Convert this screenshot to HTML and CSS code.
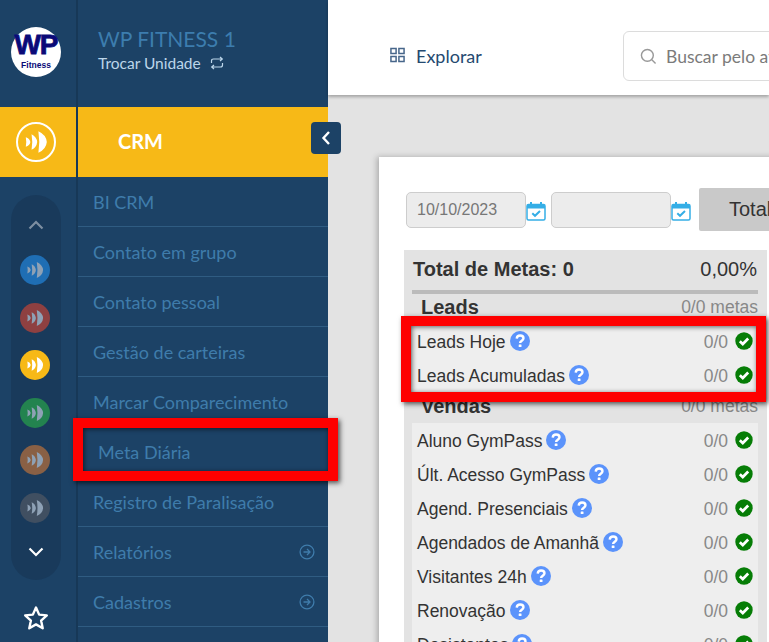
FILE: index.html
```
<!DOCTYPE html>
<html lang="pt-BR">
<head>
<meta charset="utf-8">
<title>CRM - Meta Diária</title>
<link rel="stylesheet" href="styles.css">
</head>
<body>
<svg class="defs" width="0" height="0" aria-hidden="true">
  <defs>
    <symbol id="ff" viewBox="0 0 20 20">
      <path d="M1.500 6 Q4.800 7 5.300 10 Q4.800 13 1.500 14 Q2.300 10 1.500 6Z"/>
      <path d="M6.300 3.500 Q10.500 5.500 11 10 Q10.500 14.500 6.300 16.500 Q7.500 10 6.300 3.500Z"/>
      <path d="M12 1 Q18.500 4 19 10 Q18.500 16 12 19 Q13.500 10 12 1Z"/>
    </symbol>
    <symbol id="help" viewBox="0 0 20 20">
      <circle cx="10" cy="10" r="10" fill="#5b93fb"/>
      <path d="M6.700 7.600 C6.900 5.500 8.300 4.500 10.100 4.500 C12.100 4.500 13.500 5.700 13.500 7.300 C13.500 9.600 10.100 9.700 10.100 12" fill="none" stroke="#fff" stroke-width="2.400"/>
      <rect x="8.700" y="13.400" width="2.800" height="2.700" rx=".5" fill="#fff"/>
    </symbol>
    <symbol id="check" viewBox="0 0 18 18">
      <circle cx="9" cy="9" r="8.700" fill="#067d06"/>
      <path d="M4.800 9.200 L7.800 12 L13.200 6.500" fill="none" stroke="#fff" stroke-width="2.700"/>
    </symbol>
    <symbol id="cal" viewBox="0 0 20 20">
      <path d="M1 5 Q1 3.500 2.500 3.500 H17.500 Q19 3.500 19 5 V7.500 H1Z" fill="#35aee6"/>
      <rect x="1" y="3.500" width="18" height="15.500" rx="1.500" fill="none" stroke="#35aee6" stroke-width="1.500"/>
      <path d="M5 1 V4.500 M15 1 V4.500" stroke="#35aee6" stroke-width="2"/>
      <path d="M6.300 12.300 L9 14.800 L14 10" fill="none" stroke="#35aee6" stroke-width="2"/>
    </symbol>
    <symbol id="arrow" viewBox="0 0 16 16">
      <circle cx="8" cy="8" r="6.900" fill="none" stroke="currentColor" stroke-width="1.300"/>
      <path d="M4.500 8 H11 M8 5 L11 8 L8 11" fill="none" stroke="currentColor" stroke-width="1.300"/>
    </symbol>
  </defs>
</svg>

<div class="app">
  <aside class="rail">
    <div class="rail-logo">
      <div class="logo">
        <span class="logo-wp">WP</span>
        <span class="logo-sub">Fitness</span>
      </div>
    </div>
    <div class="rail-active">
      <span class="ring"><svg class="ff-big"><use href="#ff"/></svg></span>
    </div>
    <div class="pill">
      <svg class="chev chev-dim" viewBox="0 0 16 10"><path d="M1.500 8.500 L8 2 L14.500 8.500" /></svg>
      <div class="mods">
        <span class="mod mod-blue"><svg class="ff"><use href="#ff"/></svg></span>
        <span class="mod mod-red"><svg class="ff"><use href="#ff"/></svg></span>
        <span class="mod mod-yellow"><svg class="ff ff-on"><use href="#ff"/></svg></span>
        <span class="mod mod-green"><svg class="ff"><use href="#ff"/></svg></span>
        <span class="mod mod-brown"><svg class="ff"><use href="#ff"/></svg></span>
        <span class="mod mod-gray"><svg class="ff"><use href="#ff"/></svg></span>
      </div>
      <svg class="chev" viewBox="0 0 16 10"><path d="M1.500 1.500 L8 8 L14.500 1.500" /></svg>
    </div>
    <svg class="star" viewBox="0 0 24 24"><path d="M12 2.300 L14.900 8.900 L22 9.600 L16.700 14.400 L18.200 21.500 L12 17.900 L5.800 21.500 L7.300 14.400 L2 9.600 L9.100 8.900Z"/></svg>
  </aside>

  <nav class="side">
    <div class="unit">
      <div class="unit-name">WP FITNESS 1</div>
      <div class="unit-switch">Trocar Unidade
        <svg class="swap" viewBox="0 0 14 14"><path d="M1.500 7 V5 Q1.500 3 3.500 3 H12 M10 1 L12.300 3 L10 5 M12.500 7 V9 Q12.500 11 10.500 11 H2 M4 9 L1.700 11 L4 13"/></svg>
      </div>
    </div>
    <div class="module">CRM</div>
    <ul class="menu">
      <li class="item">BI CRM</li>
      <li class="item">Contato em grupo</li>
      <li class="item">Contato pessoal</li>
      <li class="item">Gestão de carteiras</li>
      <li class="item">Marcar Comparecimento</li>
      <li class="item item-shift">Meta Diária</li>
      <li class="item">Registro de Paralisação</li>
      <li class="item">Relatórios <svg class="item-arrow"><use href="#arrow"/></svg></li>
      <li class="item">Cadastros <svg class="item-arrow"><use href="#arrow"/></svg></li>
    </ul>
  </nav>

  <div class="main">
    <header class="top">
      <a class="explore">
        <svg class="grid-ic" viewBox="0 0 16 16"><path d="M1 1h5.500v5.500H1zM9.500 1H15v5.500H9.500zM1 9.500h5.500V15H1zM9.500 9.500H15V15H9.500z"/></svg>
        Explorar
      </a>
      <div class="search">
        <svg class="search-ic" viewBox="0 0 18 18"><circle cx="7.800" cy="7.800" r="6.300"/><path d="M12.500 12.500 L16.500 16.500"/></svg>
        <span class="search-ph">Buscar pelo atalho</span>
      </div>
    </header>

    <section class="content">
      <div class="card">
        <div class="filters">
          <div class="date">10/10/2023</div>
          <svg class="cal"><use href="#cal"/></svg>
          <div class="date"></div>
          <svg class="cal"><use href="#cal"/></svg>
          <button class="total-btn">Total</button>
        </div>
        <div class="table">
          <div class="total-row"><strong>Total de Metas: 0</strong><span>0,00%</span></div>
          <div class="rule"></div>
          <div class="group-head"><strong>Leads</strong><span>0/0 metas</span></div>
          <div class="list">
            <div class="row"><span class="label">Leads Hoje</span><svg class="help"><use href="#help"/></svg><span class="count">0/0</span><svg class="ok"><use href="#check"/></svg></div>
            <div class="row"><span class="label">Leads Acumuladas</span><svg class="help"><use href="#help"/></svg><span class="count">0/0</span><svg class="ok"><use href="#check"/></svg></div>
          </div>
          <div class="group-head group-head-next"><strong>Vendas</strong><span>0/0 metas</span></div>
          <div class="list">
            <div class="row"><span class="label">Aluno GymPass</span><svg class="help"><use href="#help"/></svg><span class="count">0/0</span><svg class="ok"><use href="#check"/></svg></div>
            <div class="row"><span class="label">Últ. Acesso GymPass</span><svg class="help"><use href="#help"/></svg><span class="count">0/0</span><svg class="ok"><use href="#check"/></svg></div>
            <div class="row"><span class="label">Agend. Presenciais</span><svg class="help"><use href="#help"/></svg><span class="count">0/0</span><svg class="ok"><use href="#check"/></svg></div>
            <div class="row"><span class="label">Agendados de Amanhã</span><svg class="help"><use href="#help"/></svg><span class="count">0/0</span><svg class="ok"><use href="#check"/></svg></div>
            <div class="row"><span class="label">Visitantes 24h</span><svg class="help"><use href="#help"/></svg><span class="count">0/0</span><svg class="ok"><use href="#check"/></svg></div>
            <div class="row"><span class="label">Renovação</span><svg class="help"><use href="#help"/></svg><span class="count">0/0</span><svg class="ok"><use href="#check"/></svg></div>
            <div class="row"><span class="label">Desistentes</span><svg class="help"><use href="#help"/></svg><span class="count">0/0</span><svg class="ok"><use href="#check"/></svg></div>
          </div>
        </div>
      </div>
    </section>
  </div>

  <button class="collapse" aria-label="Recolher"><svg viewBox="0 0 10 16"><path d="M8 2 L2.500 8 L8 14"/></svg></button>
  <div class="mark mark-menu"></div>
  <div class="mark mark-leads"></div>
</div>
</body>
</html>
```

FILE: styles.css
```
* { box-sizing: border-box; }
html, body { margin: 0; padding: 0; }
body { font-family: "Liberation Sans", Arial, sans-serif; background: #e3e3e3; }
.defs { position: absolute; }

.app {
  position: relative;
  display: flex;
  width: 769px;
  height: 642px;
  overflow: hidden;
}

/* rail */
.rail {
  flex: none;
  width: 78px;
  display: flex;
  flex-direction: column;
  align-items: stretch;
  background: #1c4266;
  border-right: 2px solid #173857;
}
.rail-logo {
  height: 107px;
  padding: 27px 0 0 11px;
}
.logo {
  width: 50px;
  height: 50px;
  border-radius: 50%;
  background: #fff;
  color: #0a0a78;
  display: flex;
  flex-direction: column;
  align-items: center;
  font-weight: 700;
}
.logo-wp { font-size: 28px; line-height: 28px; margin-top: 4px; letter-spacing: -1px; -webkit-text-stroke: .8px #0a0a78; }
.logo-sub { font-size: 8.500px; line-height: 9px; margin-top: 1.500px; }
.rail-active {
  height: 70px;
  background: #f7b917;
  display: flex;
  align-items: center;
  justify-content: center;
  padding-right: 4px;
}
.ring {
  width: 40px;
  height: 40px;
  border: 2px solid #fff;
  border-radius: 50%;
  display: flex;
  align-items: center;
  justify-content: center;
}
.ff-big { width: 24px; height: 24px; fill: #fff; }
.pill {
  width: 50px;
  height: 385px;
  margin: 18px 0 0 11px;
  border-radius: 25px;
  background: #193a5b;
  display: flex;
  flex-direction: column;
  align-items: center;
}
.chev { width: 16px; height: 10px; margin-top: 25px; flex: none; fill: none; stroke: #fff; stroke-width: 2.200; }
.chev-dim { stroke: #7d8ea1; }
.mods { display: flex; flex-direction: column; gap: 17.600px; margin-top: 25px; margin-left: -2px; }
.mods + .chev { margin-top: 24px; }
.mod {
  width: 30px;
  height: 30px;
  border-radius: 50%;
  display: flex;
  align-items: center;
  justify-content: center;
}
.mod-blue { background: #1f6eb4; }
.mod-red { background: #8e4041; }
.mod-yellow { background: #f7b917; }
.mod-green { background: #23834f; }
.mod-brown { background: #896045; }
.mod-gray { background: #404f61; }
.ff { width: 18px; height: 18px; fill: #8ea1b5; }
.ff-on { fill: #fff; }
.star {
  width: 26px;
  height: 26px;
  margin: 25px 0 0 23px;
  fill: none;
  stroke: #fff;
  stroke-width: 2.200;
  stroke-linejoin: round;
}

/* sidebar */
.side {
  flex: none;
  width: 250px;
  background: #1c4266;
  font-family: Lato, "Noto Sans", sans-serif;
}
.unit { height: 107px; padding: 26px 0 0 20px; }
.unit-name { font-size: 21px; line-height: 25px; color: #3c7dae; }
.unit-switch {
  display: flex;
  align-items: center;
  gap: 9px;
  font-size: 15.500px;
  line-height: 24px;
  color: #bcd6ea;
}
.swap { width: 14px; height: 14px; fill: none; stroke: #bcd6ea; stroke-width: 1.200; }
.module {
  height: 70px;
  padding-left: 40px;
  background: #f7b917;
  color: #fff;
  font-size: 20px;
  font-weight: 700;
  line-height: 68px;
}
.menu { list-style: none; margin: 0; padding: 0; }
.item {
  height: 50px;
  padding: 0 13px 0 15px;
  border-bottom: 1px solid #2f5c82;
  color: #3f7cab;
  font-size: 18px;
  display: flex;
  align-items: center;
  justify-content: space-between;
}
.item-shift { padding-left: 20px; }
.item-arrow { width: 16px; height: 16px; color: #3f7cab; }

/* main */
.main {
  flex: none;
  width: 441px;
  display: flex;
  flex-direction: column;
}
.top {
  flex: none;
  height: 95px;
  background: #fff;
  box-shadow: 0 2px 3px rgba(0, 0, 0, .28);
  display: flex;
  align-items: flex-start;
  padding: 31px 0 0 62px;
  position: relative;
  z-index: 1;
}
.explore {
  display: flex;
  align-items: center;
  gap: 11px;
  flex: none;
  width: 233px;
  height: 50px;
  font-family: Lato, "Noto Sans", sans-serif;
  font-size: 18px;
  color: #254a70;
}
.grid-ic { width: 15px; height: 16px; fill: none; stroke: #47668a; stroke-width: 1.600; margin-top: -3px; }
.search {
  flex: none;
  width: 300px;
  height: 50px;
  border: 1px solid #dcdcdc;
  border-radius: 6px;
  display: flex;
  align-items: center;
  padding-left: 16px;
  gap: 9px;
  font-family: Lato, "Noto Sans", sans-serif;
  font-size: 17.500px;
  color: #7b7b7b;
}
.search-ic { width: 17px; height: 17px; fill: none; stroke: #999; stroke-width: 1.500; }
.search-ph { white-space: nowrap; }
.content {
  flex: 1;
  background: #e3e3e3;
  padding: 62px 0 0 51px;
  overflow: hidden;
}
.card {
  width: 520px;
  height: 600px;
  padding: 31px 0 0 25px;
  background: #fff;
  box-shadow: -2px 0 6px rgba(0, 0, 0, .25);
}
.filters { display: flex; align-items: center; height: 43px; padding-left: 2px; }
.date {
  flex: none;
  width: 120px;
  height: 36px;
  padding: 0 10px;
  background: #ececec;
  border: 1px solid #cdcdcd;
  border-radius: 5px;
  color: #777;
  font-size: 16px;
  line-height: 34px;
  margin-top: 1px;
}
.cal { flex: none; width: 20px; height: 20px; margin: 3px 5px 0 0; }
.cal + .date + .cal { margin-right: 8px; }
.total-btn {
  flex: none;
  width: 120px;
  height: 43px;
  padding: 0 0 0 30px;
  border: 0;
  border-radius: 2px;
  background: #c9c9c9;
  color: #333;
  font: 20px "Liberation Sans", Arial, sans-serif;
  text-align: left;
}
.table {
  width: 363px;
  margin-top: 19px;
  padding: 0 9px 0 8px;
  background: #e3e3e3;
  color: #333;
}
.total-row {
  height: 40px;
  padding: 0 1px 1px 1px;
  display: flex;
  align-items: center;
  justify-content: space-between;
  font-size: 20px;
}
.rule { height: 4px; background: #bbb; }
.group-head {
  height: 30px;
  padding: 0 0 3px 9px;
  display: flex;
  align-items: center;
  justify-content: space-between;
}
.group-head-next { height: 31px; }
.group-head strong { font-size: 20px; }
.group-head span { font-size: 17.500px; color: #888; }
.list { background: #eee; }
.row {
  height: 34px;
  padding: 3px 5px 0;
  display: flex;
  align-items: center;
  font-size: 17.500px;
}
.help { flex: none; width: 20px; height: 20px; margin: -3px 0 0 4px; }
.count { margin-left: auto; color: #888; }
.ok { flex: none; width: 18px; height: 18px; margin: -4px 0 0 7px; }

/* overlays */
.collapse {
  position: absolute;
  left: 311px;
  top: 122px;
  width: 30px;
  height: 32px;
  padding: 0;
  border: 0;
  border-radius: 4px;
  background: #1c4266;
  display: flex;
  align-items: center;
  justify-content: center;
}
.collapse svg { width: 10px; height: 16px; fill: none; stroke: #fff; stroke-width: 2.400; }
.mark {
  position: absolute;
  border: 10px solid #fe0000;
  box-shadow: 2px 2px 5px rgba(0, 0, 0, .65), inset 1px 1px 5px rgba(0, 0, 0, .6);
}
.mark-menu { left: 73px; top: 418px; width: 265px; height: 63px; }
.mark-leads { left: 401px; top: 316px; width: 365px; height: 86px; }
```
